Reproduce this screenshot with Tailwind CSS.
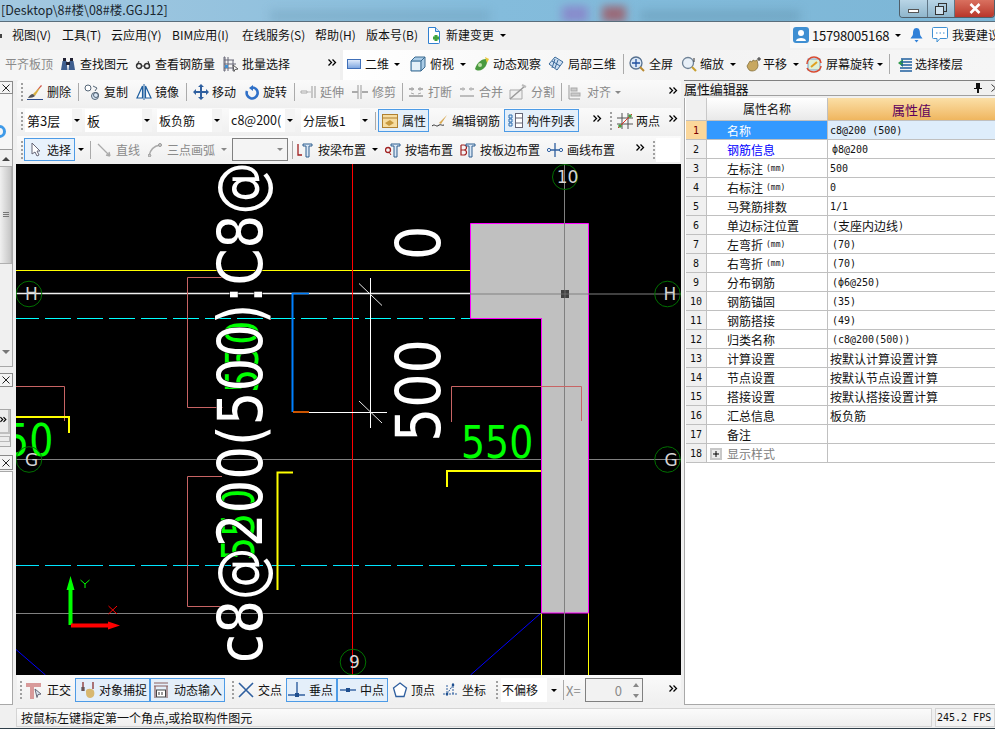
<!DOCTYPE html>
<html lang="zh">
<head>
<meta charset="utf-8">
<script src="https://cdn.jsdelivr.net/npm/@tailwindcss/browser@4"></script>
</head>
<body class="w-[995px] h-[729px] overflow-hidden bg-[#f0f0f0] text-[12px] leading-none text-[#111] font-['Noto_Sans_CJK_SC',sans-serif]">

<!-- title bar -->
<div class="relative h-[22px] overflow-hidden border-b border-[#5a6e7c] bg-gradient-to-r from-[#a3c8e0] via-[#84bcdc] to-[#7cb6d6]">
  <div class="absolute left-[270px] top-[10px] w-[220px] h-[12px] bg-[#5f8fa8]/30 blur-[5px]"></div>
  <div class="absolute left-[562px] top-[6px] w-[26px] h-[16px] bg-[#8a7fc8]/80 blur-[4px]"></div>
  <div class="absolute left-[602px] top-[6px] w-[24px] h-[16px] bg-[#a0555f]/80 blur-[4px]"></div>
  <div class="absolute left-[640px] top-[10px] w-[160px] h-[12px] bg-[#5f8fa8]/40 blur-[5px]"></div>
  <span class="absolute left-[1px] top-[4px] text-[12.5px] text-[#1a2730] whitespace-nowrap">[Desktop\8#楼\08#楼.GGJ12]</span>
  <div class="absolute left-[899px] top-0 w-[96px] h-[18px] flex border border-t-0 border-[#4f5f6a] rounded-b-[4px] overflow-hidden">
    <div class="w-[28px] bg-gradient-to-b from-[#b9d5e6] to-[#8fb6cc] border-r border-[#5f7585] flex items-center justify-center"><div class="w-[11px] h-[4px] bg-white border border-[#555] mt-[5px]"></div></div>
    <div class="w-[27px] bg-gradient-to-b from-[#b9d5e6] to-[#8fb6cc] border-r border-[#5f7585] flex items-center justify-center"><svg width="12" height="12" viewBox="0 0 12 12"><rect x="3.5" y=".5" width="8" height="8" fill="none" stroke="#333"/><rect x=".5" y="3.5" width="8" height="8" fill="#cfe2ee" stroke="#333"/></svg></div>
    <div class="flex-1 bg-gradient-to-b from-[#d9705f] to-[#b8352a] flex items-center justify-center"><svg width="12" height="11" viewBox="0 0 12 11"><path d="M1.5 1l9 9M10.5 1l-9 9" stroke="#fff" stroke-width="2.6"/></svg></div>
  </div>
</div>

<!-- menu -->
<div class="relative h-[28px] flex items-center pb-[2px] whitespace-nowrap bg-[#f1f1f1] [&>*]:shrink-0">
  <div class="absolute left-0 top-[12px] w-[2px] h-[4px] bg-[#444]"></div>
  <span class="ml-[12px] w-[40px]">视图(V)</span>
  <span class="ml-[10px] w-[38px]">工具(T)</span>
  <span class="ml-[11px] w-[50px]">云应用(Y)</span>
  <span class="ml-[11px] w-[59px]">BIM应用(I)</span>
  <span class="ml-[11px] w-[62px]">在线服务(S)</span>
  <span class="ml-[11px] w-[40px]">帮助(H)</span>
  <span class="ml-[11px] w-[51px]">版本号(B)</span>
  <svg class="ml-[10px]" width="14" height="17" viewBox="0 0 14 17"><path d="M1.5.5h7l4 4v11a1 1 0 0 1-1 1h-10z" fill="#fff" stroke="#2f7fd0"/><path d="M8.5.5v4h4" fill="#cfe3f7" stroke="#2f7fd0"/><path d="M6 11h6M9 8v6" stroke="#3fa33f" stroke-width="3"/></svg>
  <span class="ml-[5px] w-[48px]">新建变更</span>
  <i class="ml-[6px] w-0 h-0 border-x-[3px] border-t-[3px] border-x-transparent border-t-black"></i>
  <div class="absolute left-[790px] top-0 w-[205px] h-[26px] bg-[#f7f7f7] flex items-center [&>*]:shrink-0">
    <svg class="ml-[3px]" width="16" height="16" viewBox="0 0 16 16"><rect width="16" height="16" rx="3" fill="#3f8fd2"/><circle cx="8" cy="6" r="3" fill="#fff"/><path d="M3 14c0-4 10-4 10 0z" fill="#fff"/></svg>
    <span class="ml-[3px] w-[77px] text-[13px] tracking-[-0.2px]">15798005168</span>
    <i class="ml-[6px] w-0 h-0 border-x-[3px] border-t-[3px] border-x-transparent border-t-black"></i>
    <svg class="ml-[9px]" width="13" height="16" viewBox="0 0 13 16"><path d="M6.5 1c3 0 3.5 3 3.5 6 0 2 2 3 2.500 4.500H.5C1 10 3 9 3 7c0-3 .5-6 3.500-6z" fill="#2f80d8"/><path d="M4.500 13h4l-2 2.500z" fill="#2f80d8"/></svg>
    <svg class="ml-[9px]" width="16" height="16" viewBox="0 0 16 16"><path d="M1.500.5h13a1 1 0 0 1 1 1v9a1 1 0 0 1-1 1H8l-3 3.500v-3.500H1.500a1 1 0 0 1-1-1v-9a1 1 0 0 1 1-1z" fill="#fff" stroke="#3f8fd2"/><path d="M4 6h1.500M7.500 6H9M11 6h1.500" stroke="#3f8fd2"/></svg>
    <span class="ml-[4px] w-[48px]">我要建议</span>
  </div>
</div>

<!-- main toolbar -->
<div class="h-[30px] flex whitespace-nowrap">
  <div class="w-[340px] flex items-center pb-[2px] bg-[#f5f5f5] [&>*]:shrink-0">
    <span class="ml-[5px] w-[48px] text-[#8a8a8a]">平齐板顶</span>
    <svg class="ml-[7px]" width="16" height="16" viewBox="0 0 16 16"><path d="M1 14l1.500-9h4l1 9zM8.500 14l1-9h4l1.500 9z" fill="#3f5f8f"/><rect x="3" y="2" width="3" height="3" fill="#223"/><rect x="10" y="2" width="3" height="3" fill="#223"/><rect x="6" y="6" width="4" height="3" fill="#223"/></svg>
    <span class="ml-[4px] w-[48px]">查找图元</span>
    <svg class="ml-[7px]" width="16" height="16" viewBox="0 0 16 16"><circle cx="4" cy="10" r="2.500" fill="none" stroke="#333" stroke-width="1.400"/><circle cx="12" cy="10" r="2.500" fill="none" stroke="#333" stroke-width="1.400"/><path d="M6.500 10h3M1.500 10L4 5M14.500 10L13 5" stroke="#333"/></svg>
    <span class="ml-[4px] w-[60px]">查看钢筋量</span>
    <svg class="ml-[8px]" width="16" height="16" viewBox="0 0 16 16"><path d="M1 1h1v14H1zM1 4h10M1 8h12M1 12h10M5 1v14M10 4v11" stroke="#667" fill="none"/><rect x="2" y="9" width="3" height="3" fill="#3f8fd2"/><path d="M10 9l5 4-3 .5-1 2z" fill="#fff" stroke="#555"/></svg>
    <span class="ml-[3px] w-[48px]">批量选择</span>
    <svg class="ml-[38px] -mt-[4px]" width="9" height="7" viewBox="0 0 9 7"><path d="M.5.5l3 3-3 3M4.500.5l3 3-3 3" fill="none" stroke="#000" stroke-width="1.300"/></svg>
  </div>
  <div class="ml-[3px] flex-1 flex items-center pb-[2px] bg-gradient-to-r from-white via-[#f3f3f3] to-[#f6f6f6] [&>*]:shrink-0">
    <div class="ml-[4px] w-[14px] h-[10px] bg-gradient-to-b from-[#dfeafa] to-[#7fa7e0] border border-[#3f6fb8]"></div>
    <span class="ml-[4px] w-[24px]">二维</span>
    <i class="ml-[5px] w-0 h-0 border-x-[3px] border-t-[3px] border-x-transparent border-t-black"></i>
    <svg class="ml-[10px]" width="16" height="16" viewBox="0 0 16 16"><path d="M1 5l4-4h10v10l-4 4H1z" fill="#a9cbe6" stroke="#3a6a90"/><path d="M1 5h10v10M11 5l4-4" fill="none" stroke="#3a6a90"/><rect x="2" y="6" width="8" height="8" fill="#e4f0f8"/></svg>
    <span class="ml-[4px] w-[24px]">俯视</span>
    <i class="ml-[6px] w-0 h-0 border-x-[3px] border-t-[3px] border-x-transparent border-t-black"></i>
    <svg class="ml-[8px]" width="16" height="16" viewBox="0 0 16 16"><path d="M1 13C3 6 8 3 12 3c2 2 1 7-3 10-3 2-6 2-8 0z" fill="#4a9a3f"/><path d="M11 1l4 2-2 4z" fill="#e8c838"/><circle cx="6" cy="9" r="2" fill="#bde0a8"/></svg>
    <span class="ml-[3px] w-[48px]">动态观察</span>
    <svg class="ml-[7px]" width="16" height="16" viewBox="0 0 16 16"><path d="M1 8l6-7 8 5-6 8z" fill="#cfe0f2" stroke="#3a6a9a"/><path d="M4 5l8 5M7 3l-3 9M10 4l-3 8" stroke="#3a6a9a"/></svg>
    <span class="ml-[4px] w-[48px]">局部三维</span>
    <div class="ml-[7px] w-px h-[20px] bg-[#aaa]"></div>
    <svg class="ml-[5px]" width="16" height="16" viewBox="0 0 16 16"><circle cx="7" cy="7" r="6" fill="#dbe8f6" stroke="#56708f" stroke-width="1.300"/><path d="M7 3v8M3 7h8" stroke="#1f4f9f" stroke-width="1.300"/><path d="M11 11l4 4" stroke="#b98a30" stroke-width="2"/></svg>
    <span class="ml-[4px] w-[24px]">全屏</span>
    <svg class="ml-[8px]" width="16" height="16" viewBox="0 0 16 16"><circle cx="7" cy="7" r="5.500" fill="#e8f0f8" stroke="#6f8296" stroke-width="1.300"/><path d="M11 11l4 4" stroke="#c9a030" stroke-width="2.200"/><path d="M13 2v4" stroke="#333"/></svg>
    <span class="ml-[3px] w-[24px]">缩放</span>
    <i class="ml-[6px] w-0 h-0 border-x-[3px] border-t-[3px] border-x-transparent border-t-black"></i>
    <svg class="ml-[9px]" width="16" height="16" viewBox="0 0 16 16"><path d="M2 10l3-5 2 1 1-2 2 1 2-1 1 5c0 3-2 6-6 6-3 0-4-2-5-5z" fill="#c8a860" stroke="#7a6530" stroke-width=".7"/><path d="M12 3h4M14 1v4" stroke="#333"/></svg>
    <span class="ml-[2px] w-[24px]">平移</span>
    <i class="ml-[6px] w-0 h-0 border-x-[3px] border-t-[3px] border-x-transparent border-t-black"></i>
    <svg class="ml-[7px]" width="16" height="17" viewBox="0 0 16 17"><rect x="2" y="3" width="12" height="11" fill="#dff0d8" stroke="#7aa0c8"/><path d="M1 8C1 4 4 1 8 1s7 3 7 6M15 10c0 3-3 6-7 6s-6-2-7-4" fill="none" stroke="#d84a30" stroke-width="1.500"/><path d="M5 11l6-5" stroke="#e0a020" stroke-width="2"/></svg>
    <span class="ml-[4px] w-[48px]">屏幕旋转</span>
    <i class="ml-[3px] w-0 h-0 border-x-[3px] border-t-[3px] border-x-transparent border-t-black"></i>
    <div class="ml-[6px] w-px h-[20px] bg-[#aaa]"></div>
    <svg class="ml-[7px]" width="16" height="16" viewBox="0 0 16 16"><path d="M1 7l5-4v8z" fill="#2f9a4a"/><path d="M4 3h11M4 6h11M4 9h11M3 12h12M3 15h12" stroke="#1f5f9f" stroke-width="1.500"/></svg>
    <span class="ml-[2px] w-[48px]">选择楼层</span>
  </div>
</div>

<!-- body -->
<div class="h-[625px] flex">

  <!-- left strip -->
  <div class="w-[16px] shrink-0 flex flex-col">
    <div class="mt-[1px] w-[13px] h-[13px] border border-l-0 border-[#8a8a8a] bg-[#f4f4f4] flex items-center justify-center"><svg width="8" height="8" viewBox="0 0 8 8"><path d="M.5.5l7 7M7.500.5l-7 7" stroke="#222"/></svg></div>
    <div class="w-[13px] h-[273px] border-r border-b border-[#a8a8a8] bg-white flex flex-col">
      <div class="h-[55px] bg-[#f6f6f6] relative overflow-hidden"><div class="absolute left-[-7px] top-[31px] w-[13px] h-[13px] rounded-full border-[3px] border-[#3f9ae8]"></div></div>
      <div class="h-[218px] border-t border-[#9a9a9a] flex flex-col items-center bg-[#f0f0f0]">
        <i class="mt-[7px] w-0 h-0 border-x-[4px] border-b-[4px] border-x-transparent border-b-[#444]"></i>
        <div class="mt-[5px] w-full h-[98px] bg-gradient-to-r from-[#f0f0f0] to-[#c4c4c4] border border-l-0 border-[#b0b0b0] flex flex-col justify-center gap-[1px] items-end pr-[2px]"><div class="w-[6px] h-px bg-[#777]"></div><div class="w-[6px] h-px bg-[#777]"></div><div class="w-[6px] h-px bg-[#777]"></div></div>
        <i class="mt-[86px] w-0 h-0 border-x-[4px] border-t-[4px] border-x-transparent border-t-[#777]"></i>
      </div>
    </div>
    <div class="mt-[6px] w-[13px] h-[14px] border border-l-0 border-[#8a8a8a] bg-[#f4f4f4] flex items-center justify-center"><svg width="8" height="8" viewBox="0 0 8 8"><path d="M.5.5l7 7M7.500.5l-7 7" stroke="#222"/></svg></div>
    <div class="mt-[22px] w-[11px] h-[38px] border border-l-0 border-[#a8a8a8] bg-[#ececec] flex flex-col">
      <div class="h-[24px] border-r-2 border-b-2 border-[#c0c0c0] flex items-center pb-[4px]"><svg width="7" height="7" viewBox="0 0 9 7"><path d="M.5.5l3 3-3 3M4.500.5l3 3-3 3" fill="none" stroke="#000" stroke-width="1.500"/></svg></div>
      <div class="mt-[2px] h-[6px] border-y border-r border-[#b8b8b8]"></div>
    </div>
    <div class="mt-[8px] w-[13px] h-[15px] border border-l-0 border-[#8a8a8a] bg-[#f4f4f4] flex items-center justify-center"><svg width="8" height="8" viewBox="0 0 8 8"><path d="M.5.5l7 7M7.500.5l-7 7" stroke="#222"/></svg></div>
    <div class="mt-[1px] w-[13px] flex-1 border-r border-b border-t border-[#a8a8a8] bg-white"></div>
  </div>

  <!-- center -->
  <div class="w-[665px] shrink-0 flex flex-col whitespace-nowrap">

    <!-- row A -->
    <div class="h-[28px] ml-[1px] flex items-center pb-[4px] rounded-[3px] bg-gradient-to-b from-[#fafafa] to-[#efefef] [&>*]:shrink-0">
      <div class="ml-[4px] w-[2px] h-[18px] border-l-2 border-dotted border-[#a0a0a0]"></div>
      <svg class="ml-[4px]" width="16" height="16" viewBox="0 0 16 16"><path d="M15 1L6 10l2 2z" fill="#d8b040"/><path d="M9 7l5-6 1 1z" fill="#d05050"/><path d="M6 10c-2 0-4 2-5 4 3 0 6-1 7-2z" fill="#555"/><path d="M0 15.500h16" stroke="#2a4a8a"/></svg>
      <span class="ml-[4px] w-[24px]">删除</span>
      <div class="ml-[7px] w-px h-[18px] bg-[#aaa]"></div>
      <svg class="ml-[5px]" width="16" height="16" viewBox="0 0 16 16"><circle cx="4" cy="4" r="3" fill="#fff" stroke="#567"/><circle cx="11" cy="12" r="3.500" fill="#dbe8f6" stroke="#567"/><circle cx="12" cy="11" r="2.500" fill="none" stroke="#567"/><path d="M9 2l4 2-2 3" fill="none" stroke="#567"/></svg>
      <span class="ml-[4px] w-[24px]">复制</span>
      <svg class="ml-[8px]" width="16" height="16" viewBox="0 0 16 16"><path d="M6.500 2L1 14h5.500zM9.500 2L15 14H9.500z" fill="#fff" stroke="#1f5f9f" stroke-width="1.200"/><path d="M8 0v16" stroke="#1f5f9f"/></svg>
      <span class="ml-[3px] w-[24px]">镜像</span>
      <div class="ml-[7px] w-px h-[18px] bg-[#aaa]"></div>
      <svg class="ml-[6px]" width="16" height="16" viewBox="0 0 16 16"><path d="M8 0l3 3H9v4h4V5l3 3-3 3V9H9v4h2l-3 3-3-3h2V9H3v2L0 8l3-3v2h4V3H5z" fill="#2f5f9f"/></svg>
      <span class="ml-[3px] w-[24px]">移动</span>
      <svg class="ml-[9px]" width="14" height="15" viewBox="0 0 14 15"><path d="M8 2.500A5.500 5.500 0 1 1 2 6" fill="none" stroke="#2f70c8" stroke-width="2.600"/><path d="M8 0v6L4 3z" fill="#2f70c8"/></svg>
      <span class="ml-[4px] w-[24px]">旋转</span>
      <div class="ml-[7px] w-px h-[18px] bg-[#aaa]"></div>
      <svg class="ml-[5px]" width="16" height="16" viewBox="0 0 16 16"><path d="M12 2v12M15 2v12" stroke="#999"/><path d="M1 7h6v2H1z" fill="none" stroke="#aaa"/><path d="M7 8h4" stroke="#bbb"/></svg>
      <span class="ml-[4px] w-[24px] text-[#8a8a8a]">延伸</span>
      <svg class="ml-[8px]" width="16" height="16" viewBox="0 0 16 16"><path d="M6 1v14M9 1v14" stroke="#999"/><path d="M0 8h6M10 8h6" stroke="#aaa" stroke-width="2"/></svg>
      <span class="ml-[4px] w-[24px] text-[#8a8a8a]">修剪</span>
      <div class="ml-[6px] w-px h-[18px] bg-[#aaa]"></div>
      <svg class="ml-[5px]" width="16" height="16" viewBox="0 0 16 16"><path d="M1 5h5M10 5h5M1 12h14" stroke="#999" stroke-width="1.500"/><path d="M4 3v4M12 3v4M3 9l3 1M10 10l3-1" stroke="#aaa"/></svg>
      <span class="ml-[4px] w-[24px] text-[#8a8a8a]">打断</span>
      <svg class="ml-[7px]" width="16" height="16" viewBox="0 0 16 16"><path d="M1 5h5M10 5h5M1 12h14" stroke="#aaa" stroke-width="1.500"/><path d="M4 3v4M12 3v4" stroke="#bbb"/></svg>
      <span class="ml-[4px] w-[24px] text-[#8a8a8a]">合并</span>
      <svg class="ml-[6px]" width="18" height="16" viewBox="0 0 18 16"><path d="M1 6h12v9H1z" fill="#f0f0f0" stroke="#aaa"/><path d="M1 15L16 2" stroke="#999" stroke-width="1.500"/><path d="M13 1l4 2" stroke="#bbb" stroke-width="2"/></svg>
      <span class="ml-[4px] w-[24px] text-[#8a8a8a]">分割</span>
      <div class="ml-[6px] w-px h-[18px] bg-[#aaa]"></div>
      <svg class="ml-[6px]" width="13" height="16" viewBox="0 0 13 16"><path d="M1 1v14M1 15h11" stroke="#999"/><rect x="3" y="4" width="6" height="3" fill="#ccc" stroke="#aaa"/><rect x="3" y="9" width="9" height="3" fill="#ccc" stroke="#aaa"/></svg>
      <span class="ml-[6px] w-[24px] text-[#8a8a8a]">对齐</span>
      <i class="ml-[4px] w-0 h-0 border-x-[3px] border-t-[3px] border-x-transparent border-t-[#888]"></i>
      <svg class="ml-[48px] -mt-[4px]" width="9" height="7" viewBox="0 0 9 7"><path d="M.5.5l3 3-3 3M4.500.5l3 3-3 3" fill="none" stroke="#000" stroke-width="1.300"/></svg>
    </div>

    <!-- row B -->
    <div class="h-[28px] ml-[1px] flex items-center pb-[3px] bg-gradient-to-b from-[#fafafa] to-[#efefef] [&>*]:shrink-0">
      <div class="ml-[4px] w-[2px] h-[18px] border-l-2 border-dotted border-[#a0a0a0]"></div>
      <div class="ml-[2px] w-[57px] h-[23px] bg-white flex items-center pl-[2px]"><span class="text-[13px]">第3层</span><div class="ml-auto w-[10px] h-full bg-[#f4f4f4] flex items-center justify-center"><i class="w-0 h-0 border-x-[3px] border-t-[3px] border-x-transparent border-t-black"></i></div></div>
      <div class="ml-[3px] w-[67px] h-[23px] bg-white flex items-center pl-[2px]"><span class="text-[13px]">板</span><div class="ml-auto w-[10px] h-full bg-[#f4f4f4] flex items-center justify-center"><i class="w-0 h-0 border-x-[3px] border-t-[3px] border-x-transparent border-t-black"></i></div></div>
      <div class="ml-[5px] w-[65px] h-[23px] bg-white flex items-center pl-[2px]"><span class="text-[12px]">板负筋</span><div class="ml-auto w-[10px] h-full bg-[#f4f4f4] flex items-center justify-center"><i class="w-0 h-0 border-x-[3px] border-t-[3px] border-x-transparent border-t-black"></i></div></div>
      <div class="ml-[7px] w-[66px] h-[23px] bg-white flex items-center pl-[2px]"><span class="text-[12.5px]">c8@200(</span><div class="ml-auto w-[10px] h-full bg-[#f4f4f4] flex items-center justify-center"><i class="w-0 h-0 border-x-[3px] border-t-[3px] border-x-transparent border-t-black"></i></div></div>
      <div class="ml-[6px] w-[69px] h-[23px] bg-white flex items-center pl-[2px]"><span class="text-[12px]">分层板1</span><div class="ml-auto w-[10px] h-full bg-[#f4f4f4] flex items-center justify-center"><i class="w-0 h-0 border-x-[3px] border-t-[3px] border-x-transparent border-t-black"></i></div></div>
      <div class="ml-[5px] w-px h-[18px] bg-[#aaa]"></div>
      <div class="ml-[2px] w-[51px] h-[23px] flex items-center border border-[#4d9be6] bg-[#e4effa]">
        <svg class="ml-[3px] shrink-0" width="16" height="14" viewBox="0 0 16 14"><rect x=".5" y=".5" width="15" height="13" fill="#f6dca0" stroke="#b08030"/><path d="M.5 4h15" stroke="#b08030"/><path d="M3 9l5-3 4 3-5 3z" fill="#c89a40"/></svg>
        <span class="ml-[4px]">属性</span>
      </div>
      <svg class="ml-[3px]" width="16" height="16" viewBox="0 0 16 16"><path d="M15 2L7 10l2 1z" fill="#d8a850"/><path d="M0 13c3-3 4 2 7-1 2-1 3 1 5 0" fill="none" stroke="#333"/></svg>
      <span class="ml-[4px] w-[48px]">编辑钢筋</span>
      <div class="ml-[4px] w-[75px] h-[23px] flex items-center border border-[#4d9be6] bg-[#e4effa]">
        <svg class="ml-[3px] shrink-0" width="15" height="15" viewBox="0 0 15 15"><rect x="7.500" y=".5" width="7" height="14" fill="#fff" stroke="#667"/><path d="M7.500 5h7M7.500 10h7" stroke="#667"/><path d="M1 2h3v3H1zM1 6h3v3H1zM1 10h3v3H1z" fill="none" stroke="#2f6fb0"/></svg>
        <span class="ml-[4px]">构件列表</span>
      </div>
      <svg class="ml-[14px] -mt-[4px]" width="9" height="7" viewBox="0 0 9 7"><path d="M.5.5l3 3-3 3M4.500.5l3 3-3 3" fill="none" stroke="#000" stroke-width="1.300"/></svg>
      <div class="ml-[8px] w-[2px] h-[18px] border-l-2 border-dotted border-[#a0a0a0]"></div>
      <svg class="ml-[5px]" width="16" height="16" viewBox="0 0 16 16"><path d="M0 5h16M0 11h16M5 0v16M11 0v16" stroke="#555"/><path d="M1 15L15 1" stroke="#e03020"/><circle cx="3" cy="13" r="1.800" fill="#4a9a3f"/><circle cx="13" cy="3" r="1.800" fill="#4a9a3f"/></svg>
      <span class="ml-[3px] w-[24px]">两点</span>
      <svg class="ml-[9px] -mt-[4px]" width="9" height="7" viewBox="0 0 9 7"><path d="M.5.5l3 3-3 3M4.500.5l3 3-3 3" fill="none" stroke="#000" stroke-width="1.300"/></svg>
    </div>

    <!-- row C -->
    <div class="h-[28px] ml-[1px] flex items-center pb-[1px] bg-gradient-to-b from-[#fafafa] to-[#efefef] [&>*]:shrink-0">
      <div class="ml-[4px] w-[2px] h-[18px] border-l-2 border-dotted border-[#a0a0a0]"></div>
      <div class="ml-[1px] w-[51px] h-[23px] flex items-center border border-[#4d9be6] bg-[#e8f2fc]">
        <svg class="ml-[6px] shrink-0" width="10" height="15" viewBox="0 0 10 15"><path d="M1 1v11l3-2 2 4 2-1-2-4h3z" fill="#fff" stroke="#667"/></svg>
        <span class="ml-[6px]">选择</span>
      </div>
      <i class="ml-[3px] w-0 h-0 border-x-[3px] border-t-[3px] border-x-transparent border-t-black"></i>
      <div class="ml-[6px] w-px h-[18px] bg-[#aaa]"></div>
      <svg class="ml-[6px]" width="14" height="14" viewBox="0 0 14 14"><path d="M1 1l12 12M13 13l-4-1M13 13l-1-4" stroke="#aaa" stroke-width="1.300"/></svg>
      <span class="ml-[5px] w-[24px] text-[#8a8a8a]">直线</span>
      <svg class="ml-[8px]" width="14" height="14" viewBox="0 0 14 14"><path d="M1 13C2 7 6 3 12 2" fill="none" stroke="#aaa" stroke-width="1.500"/><circle cx="12" cy="2" r="1.500" fill="#ccc" stroke="#999"/><circle cx="1.500" cy="12.500" r="1.300" fill="#ccc" stroke="#999"/></svg>
      <span class="ml-[5px] w-[48px] text-[#8a8a8a]">三点画弧</span>
      <i class="ml-[6px] w-0 h-0 border-x-[3px] border-t-[3px] border-x-transparent border-t-[#888]"></i>
      <div class="ml-[5px] w-[56px] h-[23px] border border-[#808080] bg-[#f4f4f4] flex items-center justify-end pr-[4px]"><i class="w-0 h-0 border-x-[3px] border-t-[3px] border-x-transparent border-t-[#888]"></i></div>
      <div class="ml-[4px] w-px h-[18px] bg-[#aaa]"></div>
      <svg class="ml-[4px]" width="16" height="16" viewBox="0 0 16 16"><path d="M1 2v11h4" fill="none" stroke="#a02020" stroke-width="1.300"/><path d="M6 2h9v2h-3v11H9V4H6z" fill="#dbe8f6" stroke="#2f5f8f"/></svg>
      <span class="ml-[5px] w-[48px]">按梁布置</span>
      <i class="ml-[6px] w-0 h-0 border-x-[3px] border-t-[3px] border-x-transparent border-t-black"></i>
      <svg class="ml-[7px]" width="16" height="16" viewBox="0 0 16 16"><circle cx="3" cy="8" r="2.500" fill="none" stroke="#a02020" stroke-width="1.300"/><path d="M4 10l2 3" stroke="#a02020"/><path d="M6 2h9v2h-3v11H9V4H6z" fill="#dbe8f6" stroke="#2f5f8f"/></svg>
      <span class="ml-[4px] w-[48px]">按墙布置</span>
      <svg class="ml-[7px]" width="16" height="16" viewBox="0 0 16 16"><path d="M1 3v10h3a2 2 0 0 0 0-5H1M1 8h3a2 2 0 0 0 0-5H1" fill="none" stroke="#a02020" stroke-width="1.200"/><path d="M6 2h9v2h-3v11H9V4H6z" fill="#dbe8f6" stroke="#2f5f8f"/></svg>
      <span class="ml-[4px] w-[60px]">按板边布置</span>
      <svg class="ml-[7px]" width="16" height="16" viewBox="0 0 16 16"><path d="M0 8h16M8 1v14" stroke="#2f5f9f" stroke-width="1.300"/><circle cx="2" cy="8" r="1.600" fill="#fff" stroke="#2f5f9f"/><circle cx="14" cy="8" r="1.600" fill="#fff" stroke="#2f5f9f"/></svg>
      <span class="ml-[4px] w-[48px]">画线布置</span>
      <svg class="ml-[21px] -mt-[4px]" width="9" height="7" viewBox="0 0 9 7"><path d="M.5.5l3 3-3 3M4.500.5l3 3-3 3" fill="none" stroke="#000" stroke-width="1.300"/></svg>
      <div class="ml-[8px] w-[2px] h-[18px] border-l-2 border-dotted border-[#a0a0a0]"></div>
      <div class="ml-[1px] w-[24px] h-[24px] bg-white"></div>
    </div>

    <!-- canvas -->
    <svg class="w-[665px] h-[511px] bg-black" viewBox="16 164 665 511" font-family="'DejaVu Sans',sans-serif">
      <path d="M16 649.500L45.500 675M541 613L470.500 675" stroke="#0000ff" fill="none"/>
      <path d="M541.500 613v62M588.500 613v62" stroke="#ffff00"/>
      <path d="M16 270.500h454" stroke="#ffff00"/>
      <path d="M16 459.500h665M16 613.500h526" stroke="#808080"/>
      <path d="M470.500 223.500H588.500V613H541.500V318.500H470.500Z" fill="#c0c0c0" stroke="#ff00ff"/>
      <path d="M16 293.500h454" stroke="#f0f0f0" stroke-width="1.600"/>
      <path d="M470 294h211" stroke="#808080"/>
      <path d="M13 318.500H470" stroke="#00ffff" stroke-dasharray="26 6"/>
      <path d="M13 565.500H541" stroke="#00e5ff" stroke-dasharray="26 6"/>
      <path d="M352.500 164v511" stroke="#ff0000"/>
      <path d="M564.500 164v511" stroke="#808080"/>
      <rect x="561" y="290" width="8" height="8" fill="#404040"/>
      <path d="M561 294h8M565 290v8" stroke="#808080" stroke-width=".6"/>

      <g fill="none" stroke="#c86464">
        <path d="M222 277.500H187.500V407.500H223"/>
        <path d="M222 476.500H187.500V606.500H223"/>
        <path d="M16 386.500H64.500V421"/>
        <path d="M451.500 422V386.500H581.500V421"/>
      </g>
      <g fill="none" stroke="#ffff00" stroke-width="2">
        <path d="M16 417H69V433"/>
        <path d="M447 487V471H541"/>
        <path d="M293 472.500H277.500V590"/>
      </g>

      <!-- green dims -->
      <g fill="#00ff00" font-size="44">
        <text transform="translate(461,458) scale(.86,1)">550</text>
        <text transform="translate(-19,456) scale(.86,1)">550</text>
        <text transform="translate(258,393) rotate(-90) scale(.86,1)">550</text>
        <text transform="translate(254,561) rotate(-90) scale(.86,1)">550</text>
      </g>
      <!-- white dims -->
      <g fill="#ffffff" font-size="62" stroke="#000" stroke-width="1" paint-order="stroke">
        <text transform="translate(262,663) rotate(-90) scale(.855,1)">c8@200(500):C8@200</text>
        <text transform="translate(440,442) rotate(-90) scale(.87,1)">500</text>
        <text transform="translate(440,260) rotate(-90) scale(.87,1)">0</text>
      </g>

      <path d="M292.500 293v119" stroke="#0080ff" stroke-width="2"/>
      <path d="M292 293.500h17" stroke="#0080ff" stroke-width="1.600"/>
      <path d="M309 412.500h78" stroke="#ffffff"/>
      <path d="M293 412h16" stroke="#ff6a00" stroke-width="1.600"/>
      <path d="M370.500 278v150" stroke="#ffffff"/>
      <path d="M359 283.500l23 22M359 401l23 22" stroke="#e8e8e8"/>

      <!-- axis bubbles -->
      <g fill="none" stroke="#007000">
        <circle cx="29" cy="294" r="12.800"/>
        <circle cx="667.500" cy="294" r="12.800"/>
        <circle cx="29" cy="459.500" r="12.800"/>
        <circle cx="667.500" cy="459.500" r="12.800"/>
        <circle cx="565" cy="177" r="12.500"/>
        <circle cx="353" cy="662" r="12.800"/>
      </g>
      <g fill="#d4d4d4" font-size="17" text-anchor="middle">
        <text x="31.500" y="300">H</text>
        <text x="670" y="300">H</text>
        <text x="31.500" y="466">G</text>
        <text x="671" y="466">G</text>
        <text x="567.500" y="183">10</text>
        <text x="354.500" y="668">9</text>
      </g>

      <!-- UCS -->
      <path d="M70.500 625V586" stroke="#00ff00" stroke-width="4"/>
      <path d="M70.500 576l-4 14h8z" fill="#00ff00"/>
      <path d="M71 625.500h38" stroke="#ff0000" stroke-width="4"/>
      <path d="M120 625.500l-12-4v8z" fill="#ff0000"/>
      <path d="M80.500 580l4.500 4 4.500-4M85 584v4" stroke="#00ff00" fill="none"/>
      <path d="M108.500 606l8.500 8M117 606l-8.500 8" stroke="#ff0000"/>
    </svg>

    <!-- bottom toolbar -->
    <div class="h-[30px] ml-[1px] flex items-center bg-gradient-to-b from-[#fafafa] to-[#efefef] [&>*]:shrink-0">
      <div class="ml-[3px] w-[2px] h-[18px] border-l-2 border-dotted border-[#a0a0a0]"></div>
      <svg class="ml-[4px]" width="17" height="17" viewBox="0 0 17 17"><path d="M0 1h15v4H8v12H4V5H0z" fill="#d89a9a"/><path d="M9 7l6 5-3 .5-1 3z" fill="#dde6f0" stroke="#667"/></svg>
      <span class="ml-[4px] w-[24px]">正交</span>
      <div class="ml-[4px] w-[75px] h-[24px] flex items-center border border-[#4d9be6] bg-[#e4effa]">
        <svg class="ml-[4px] shrink-0" width="16" height="17" viewBox="0 0 16 17"><path d="M3 0v9M13 0v7" stroke="#8a3030" stroke-width="1.300"/><path d="M1 6h4M1 8h4" stroke="#333"/><path d="M6 9c0-3 7-3 8 0s0 7-4 7-4-4-4-7z" fill="#d8b870"/></svg>
        <span class="ml-[3px]">对象捕捉</span>
      </div>
      <div class="w-[75px] h-[24px] flex items-center border border-[#4d9be6] bg-[#e4effa]">
        <svg class="ml-[2px] shrink-0" width="16" height="17" viewBox="0 0 16 17"><path d="M1 1h14M1 4h14M2 4v12M14 4v12" stroke="#8a6060" stroke-width="1.200"/><rect x="3.500" y="8" width="9" height="7" fill="#fff" stroke="#444"/><path d="M6 10v3M9 10v3" stroke="#333"/></svg>
        <span class="ml-[5px]">动态输入</span>
      </div>
      <div class="ml-[7px] w-[2px] h-[18px] border-l-2 border-dotted border-[#a0a0a0]"></div>
      <svg class="ml-[4px]" width="16" height="16" viewBox="0 0 16 16"><path d="M1 1l14 14M15 1L1 15" stroke="#2f5f9f" stroke-width="1.600"/></svg>
      <span class="ml-[4px] w-[24px]">交点</span>
      <div class="ml-[4px] w-[51px] h-[24px] flex items-center border border-[#4d9be6] bg-[#e4effa]">
        <svg class="ml-[1px] shrink-0" width="17" height="16" viewBox="0 0 17 16"><path d="M9 0v13M0 13h17" stroke="#2f5f9f" stroke-width="1.400"/><rect x="7" y="11" width="4" height="4" fill="#1f4f8f"/></svg>
        <span class="ml-[4px]">垂点</span>
      </div>
      <div class="w-[51px] h-[24px] flex items-center border border-[#4d9be6] bg-[#e4effa]">
        <svg class="ml-[2px] shrink-0" width="16" height="16" viewBox="0 0 16 16"><path d="M0 8h16" stroke="#2f5f9f" stroke-width="1.400"/><rect x="6" y="6" width="4" height="4" fill="#1f4f8f"/></svg>
        <span class="ml-[4px]">中点</span>
      </div>
      <svg class="ml-[4px]" width="16" height="16" viewBox="0 0 16 16"><path d="M8 1l6.500 5-2.500 8.500H4L1.500 6z" fill="#fff" stroke="#2f5f9f" stroke-width="1.300"/></svg>
      <span class="ml-[3px] w-[24px]">顶点</span>
      <svg class="ml-[7px]" width="16" height="16" viewBox="0 0 16 16"><path d="M1 12h14M5 3v11M11 1v11M5 12l6-9" stroke="#2f5f9f" stroke-dasharray="2 1"/><circle cx="11" cy="3" r="1.300" fill="#1f4f8f"/><circle cx="5" cy="12" r="1.300" fill="#1f4f8f"/></svg>
      <span class="ml-[4px] w-[24px]">坐标</span>
      <div class="ml-[10px] w-[2px] h-[18px] border-l-2 border-dotted border-[#a0a0a0]"></div>
      <div class="ml-[3px] w-[59px] h-[24px] bg-white flex items-center pl-[1px]"><span>不偏移</span><div class="ml-auto w-[13px] h-full bg-[#f4f4f4] flex items-center justify-center"><i class="w-0 h-0 border-x-[3px] border-t-[3px] border-x-transparent border-t-black"></i></div></div>
      <div class="ml-[3px] w-px h-[20px] bg-[#aaa]"></div>
      <span class="ml-[2px] w-[16px] text-[#8a8a8a] text-[13px]">X=</span>
      <div class="ml-[3px] w-[58px] h-[24px] border border-[#808080] bg-[#f2f2f2] flex items-center justify-end"><span class="text-[#8a8a8a] text-[13px] mr-[11px]">0</span><div class="flex flex-col gap-[7px] mr-[3px]"><i class="block w-0 h-0 border-x-[3px] border-b-[4px] border-x-transparent border-b-[#888]"></i><i class="block w-0 h-0 border-x-[3px] border-t-[4px] border-x-transparent border-t-[#888]"></i></div></div>
      <svg class="ml-[26px] -mt-[4px]" width="9" height="7" viewBox="0 0 9 7"><path d="M.5.5l3 3-3 3M4.500.5l3 3-3 3" fill="none" stroke="#000" stroke-width="1.300"/></svg>
    </div>
  </div>

  <!-- property panel -->
  <div class="ml-[3px] w-[311px] shrink-0 flex flex-col">
    <div class="h-[16px] flex items-center border-t border-b border-[#808080] border-b-[#a0a0a0] bg-[#f0f0f0] whitespace-nowrap">
      <span class="text-[13px] tracking-[-0.1px]">属性编辑器</span>
      <svg class="ml-auto" width="8" height="10" viewBox="0 0 8 10"><path d="M2 0h4v5h2v1H5v4H3V6H0V5h2z" fill="#111"/></svg>
      <svg class="ml-[9px] mr-[-1px]" width="5" height="8" viewBox="0 0 5 8"><path d="M.5.5L4.500 4 .5 7.500" fill="none" stroke="#333"/></svg>
    </div>
    <div class="flex-1 mt-[2px] bg-white border-l border-b border-[#a8a8a8] whitespace-nowrap">
      <div class="ml-[1px]">
        <!-- header -->
        <div class="grid grid-cols-[21px_121px_1fr] h-[23px] border-b border-[#c0c0c0]">
          <div class="bg-[#f0f0f0] border-r border-[#c8c8c8]"></div>
          <div class="bg-gradient-to-b from-white to-[#e9e9e9] border-r border-[#c0c0c0] flex items-center justify-center text-[12px]">属性名称</div>
          <div class="bg-gradient-to-b from-[#fbdfa6] to-[#efb65e] flex items-center justify-center text-[#5c005c] text-[13px]">属性值</div>
        </div>
        <!-- rows -->
        <div class="grid grid-cols-[21px_121px_1fr] h-[19px] border-b border-[#c0c0c0] [&>*]:pt-[2px]"><div class="bg-[#fbd79b] border-r border-[#c0c0c0] flex items-center justify-center text-[#7a0000] font-['DejaVu_Sans_Mono'] text-[10px]">1</div><div class="bg-[#3399ff] text-white border-r border-[#c0c0c0] flex items-center pl-[20px]">名称</div><div class="bg-[#deedfb] flex items-center pl-[2px] font-['DejaVu_Sans_Mono'] text-[10px]">c8@200 (500)</div></div>
        <div class="grid grid-cols-[21px_121px_1fr] h-[19px] border-b border-[#c0c0c0] [&>*]:pt-[2px]"><div class="bg-[#f0f0f0] border-r border-[#c0c0c0] flex items-center justify-center font-['DejaVu_Sans_Mono'] text-[10px]">2</div><div class="text-[#0000ff] border-r border-[#c0c0c0] flex items-center pl-[20px]">钢筋信息</div><div class="flex items-center pl-[4px] font-['DejaVu_Sans_Mono'] text-[10px]">ф8@200</div></div>
        <div class="grid grid-cols-[21px_121px_1fr] h-[19px] border-b border-[#c0c0c0] [&>*]:pt-[2px]"><div class="bg-[#f0f0f0] border-r border-[#c0c0c0] flex items-center justify-center font-['DejaVu_Sans_Mono'] text-[10px]">3</div><div class="border-r border-[#c0c0c0] flex items-center pl-[20px]">左标注<span class="ml-[3px] font-['DejaVu_Sans_Mono'] text-[8px]">(mm)</span></div><div class="flex items-center pl-[2px] font-['DejaVu_Sans_Mono'] text-[10px]">500</div></div>
        <div class="grid grid-cols-[21px_121px_1fr] h-[19px] border-b border-[#c0c0c0] [&>*]:pt-[2px]"><div class="bg-[#f0f0f0] border-r border-[#c0c0c0] flex items-center justify-center font-['DejaVu_Sans_Mono'] text-[10px]">4</div><div class="border-r border-[#c0c0c0] flex items-center pl-[20px]">右标注<span class="ml-[3px] font-['DejaVu_Sans_Mono'] text-[8px]">(mm)</span></div><div class="flex items-center pl-[2px] font-['DejaVu_Sans_Mono'] text-[10px]">0</div></div>
        <div class="grid grid-cols-[21px_121px_1fr] h-[19px] border-b border-[#c0c0c0] [&>*]:pt-[2px]"><div class="bg-[#f0f0f0] border-r border-[#c0c0c0] flex items-center justify-center font-['DejaVu_Sans_Mono'] text-[10px]">5</div><div class="border-r border-[#c0c0c0] flex items-center pl-[20px]">马凳筋排数</div><div class="flex items-center pl-[2px] font-['DejaVu_Sans_Mono'] text-[10px]">1/1</div></div>
        <div class="grid grid-cols-[21px_121px_1fr] h-[19px] border-b border-[#c0c0c0] [&>*]:pt-[2px]"><div class="bg-[#f0f0f0] border-r border-[#c0c0c0] flex items-center justify-center font-['DejaVu_Sans_Mono'] text-[10px]">6</div><div class="border-r border-[#c0c0c0] flex items-center pl-[20px]">单边标注位置</div><div class="flex items-center pl-[4px]"><span class="font-['DejaVu_Sans_Mono'] text-[10px]">(</span>支座内边线<span class="font-['DejaVu_Sans_Mono'] text-[10px]">)</span></div></div>
        <div class="grid grid-cols-[21px_121px_1fr] h-[19px] border-b border-[#c0c0c0] [&>*]:pt-[2px]"><div class="bg-[#f0f0f0] border-r border-[#c0c0c0] flex items-center justify-center font-['DejaVu_Sans_Mono'] text-[10px]">7</div><div class="border-r border-[#c0c0c0] flex items-center pl-[20px]">左弯折<span class="ml-[3px] font-['DejaVu_Sans_Mono'] text-[8px]">(mm)</span></div><div class="flex items-center pl-[4px] font-['DejaVu_Sans_Mono'] text-[10px]">(70)</div></div>
        <div class="grid grid-cols-[21px_121px_1fr] h-[19px] border-b border-[#c0c0c0] [&>*]:pt-[2px]"><div class="bg-[#f0f0f0] border-r border-[#c0c0c0] flex items-center justify-center font-['DejaVu_Sans_Mono'] text-[10px]">8</div><div class="border-r border-[#c0c0c0] flex items-center pl-[20px]">右弯折<span class="ml-[3px] font-['DejaVu_Sans_Mono'] text-[8px]">(mm)</span></div><div class="flex items-center pl-[4px] font-['DejaVu_Sans_Mono'] text-[10px]">(70)</div></div>
        <div class="grid grid-cols-[21px_121px_1fr] h-[19px] border-b border-[#c0c0c0] [&>*]:pt-[2px]"><div class="bg-[#f0f0f0] border-r border-[#c0c0c0] flex items-center justify-center font-['DejaVu_Sans_Mono'] text-[10px]">9</div><div class="border-r border-[#c0c0c0] flex items-center pl-[20px]">分布钢筋</div><div class="flex items-center pl-[4px] font-['DejaVu_Sans_Mono'] text-[10px]">(ф6@250)</div></div>
        <div class="grid grid-cols-[21px_121px_1fr] h-[19px] border-b border-[#c0c0c0] [&>*]:pt-[2px]"><div class="bg-[#f0f0f0] border-r border-[#c0c0c0] flex items-center justify-center font-['DejaVu_Sans_Mono'] text-[10px]">10</div><div class="border-r border-[#c0c0c0] flex items-center pl-[20px]">钢筋锚固</div><div class="flex items-center pl-[4px] font-['DejaVu_Sans_Mono'] text-[10px]">(35)</div></div>
        <div class="grid grid-cols-[21px_121px_1fr] h-[19px] border-b border-[#c0c0c0] [&>*]:pt-[2px]"><div class="bg-[#f0f0f0] border-r border-[#c0c0c0] flex items-center justify-center font-['DejaVu_Sans_Mono'] text-[10px]">11</div><div class="border-r border-[#c0c0c0] flex items-center pl-[20px]">钢筋搭接</div><div class="flex items-center pl-[4px] font-['DejaVu_Sans_Mono'] text-[10px]">(49)</div></div>
        <div class="grid grid-cols-[21px_121px_1fr] h-[19px] border-b border-[#c0c0c0] [&>*]:pt-[2px]"><div class="bg-[#f0f0f0] border-r border-[#c0c0c0] flex items-center justify-center font-['DejaVu_Sans_Mono'] text-[10px]">12</div><div class="border-r border-[#c0c0c0] flex items-center pl-[20px]">归类名称</div><div class="flex items-center pl-[4px] font-['DejaVu_Sans_Mono'] text-[10px]">(c8@200(500))</div></div>
        <div class="grid grid-cols-[21px_121px_1fr] h-[19px] border-b border-[#c0c0c0] [&>*]:pt-[2px]"><div class="bg-[#f0f0f0] border-r border-[#c0c0c0] flex items-center justify-center font-['DejaVu_Sans_Mono'] text-[10px]">13</div><div class="border-r border-[#c0c0c0] flex items-center pl-[20px]">计算设置</div><div class="flex items-center pl-[2px]">按默认计算设置计算</div></div>
        <div class="grid grid-cols-[21px_121px_1fr] h-[19px] border-b border-[#c0c0c0] [&>*]:pt-[2px]"><div class="bg-[#f0f0f0] border-r border-[#c0c0c0] flex items-center justify-center font-['DejaVu_Sans_Mono'] text-[10px]">14</div><div class="border-r border-[#c0c0c0] flex items-center pl-[20px]">节点设置</div><div class="flex items-center pl-[2px]">按默认节点设置计算</div></div>
        <div class="grid grid-cols-[21px_121px_1fr] h-[19px] border-b border-[#c0c0c0] [&>*]:pt-[2px]"><div class="bg-[#f0f0f0] border-r border-[#c0c0c0] flex items-center justify-center font-['DejaVu_Sans_Mono'] text-[10px]">15</div><div class="border-r border-[#c0c0c0] flex items-center pl-[20px]">搭接设置</div><div class="flex items-center pl-[2px]">按默认搭接设置计算</div></div>
        <div class="grid grid-cols-[21px_121px_1fr] h-[19px] border-b border-[#c0c0c0] [&>*]:pt-[2px]"><div class="bg-[#f0f0f0] border-r border-[#c0c0c0] flex items-center justify-center font-['DejaVu_Sans_Mono'] text-[10px]">16</div><div class="border-r border-[#c0c0c0] flex items-center pl-[20px]">汇总信息</div><div class="flex items-center pl-[2px]">板负筋</div></div>
        <div class="grid grid-cols-[21px_121px_1fr] h-[19px] border-b border-[#c0c0c0] [&>*]:pt-[2px]"><div class="bg-[#f0f0f0] border-r border-[#c0c0c0] flex items-center justify-center font-['DejaVu_Sans_Mono'] text-[10px]">17</div><div class="border-r border-[#c0c0c0] flex items-center pl-[20px]">备注</div><div></div></div>
        <div class="grid grid-cols-[21px_121px_1fr] h-[19px] border-b border-[#c0c0c0] [&>*]:pt-[2px]"><div class="bg-[#f0f0f0] border-r border-[#c0c0c0] flex items-center justify-center font-['DejaVu_Sans_Mono'] text-[10px]">18</div><div class="border-r border-[#c0c0c0] flex items-center pl-[3px] text-[#808080]"><div class="w-[12px] h-[12px] border-2 border-[#c8c8c8] bg-[#ececec] flex items-center justify-center mr-[5px]"><svg width="6" height="6" viewBox="0 0 6 6"><path d="M3 0v6M0 3h6" stroke="#000"/></svg></div>显示样式</div><div></div></div>
      </div>
    </div>
  </div>
</div>

<!-- status bar -->
<div class="h-[24px] flex pt-[3px] whitespace-nowrap border-b border-[#2f3f4a]">
  <div class="ml-[16px] w-[916px] h-[19px] border border-[#d4d4d4] bg-gradient-to-b from-[#fbfbfb] to-[#efefef] flex items-center pl-[4px]">按鼠标左键指定第一个角点,或拾取构件图元</div>
  <div class="ml-[3px] w-[60px] h-[19px] border border-[#d4d4d4] bg-[#f4f4f4] flex items-center pl-[1px] font-['DejaVu_Sans_Mono'] text-[10px]">245.2 FPS</div>
</div>

</body>
</html>
